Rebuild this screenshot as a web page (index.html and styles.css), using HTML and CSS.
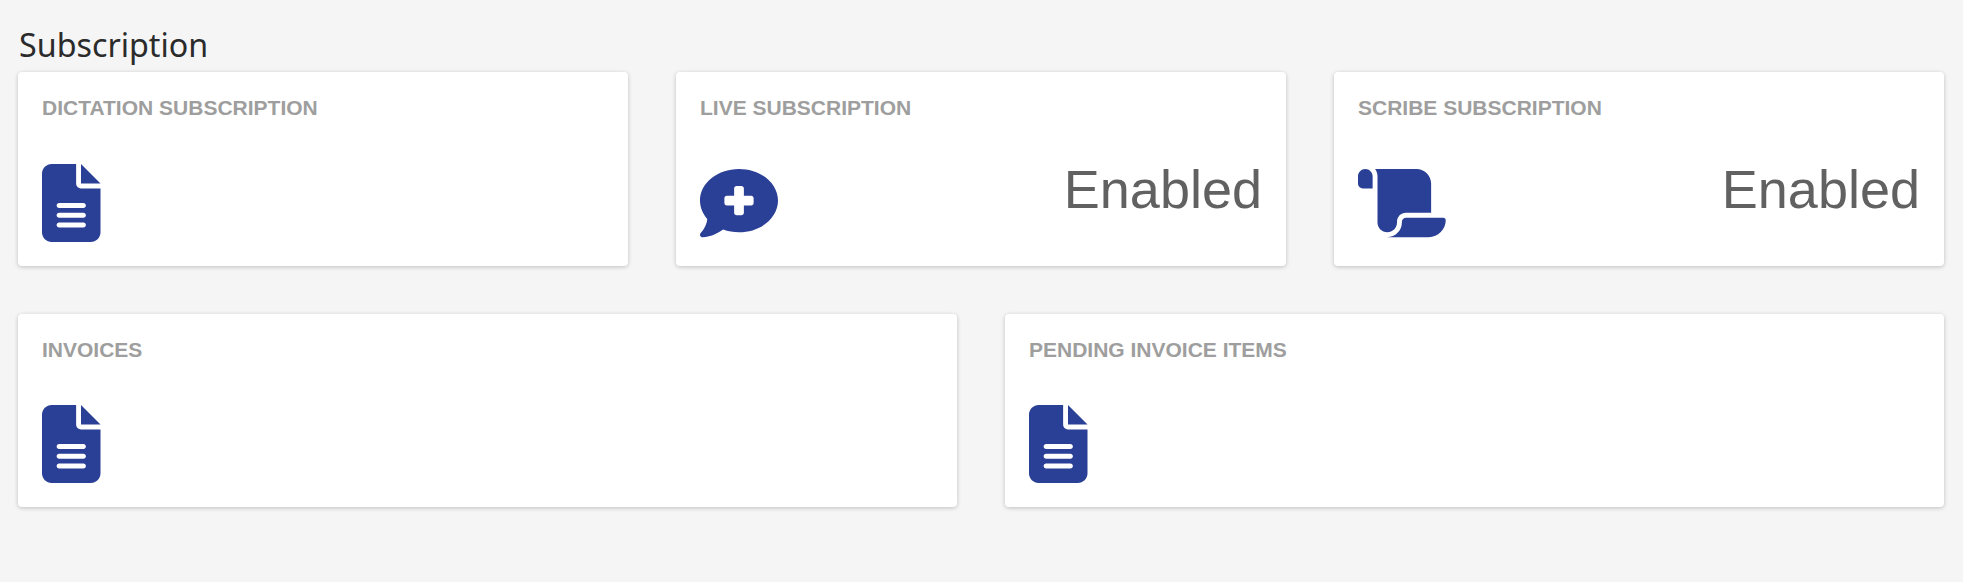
FILE: index.html
```html
<!DOCTYPE html>
<html lang="en">
<head>
<meta charset="utf-8">
<title>Subscription</title>
<link rel="stylesheet" href="styles.css">
</head>
<body>
<main class="page">
  <h1 class="title">Subscription</h1>
  <section class="row row-3">
    <article class="card">
      <h2 class="label">DICTATION SUBSCRIPTION</h2>
      <div class="content">
        <svg class="icon" viewBox="0 0 384 512"><path d="M64 0C28.7 0 0 28.7 0 64V448c0 35.3 28.7 64 64 64H320c35.3 0 64-28.7 64-64V160H256c-17.7 0-32-14.3-32-32V0H64zM256 0V128H384L256 0zM112 256H272c8.8 0 16 7.2 16 16s-7.2 16-16 16H112c-8.8 0-16-7.2-16-16s7.2-16 16-16zm0 64H272c8.8 0 16 7.2 16 16s-7.2 16-16 16H112c-8.8 0-16-7.2-16-16s7.2-16 16-16zm0 64H272c8.8 0 16 7.2 16 16s-7.2 16-16 16H112c-8.8 0-16-7.2-16-16s7.2-16 16-16z"/></svg>
      </div>
    </article>
    <article class="card">
      <h2 class="label">LIVE SUBSCRIPTION</h2>
      <div class="content">
        <svg class="icon" viewBox="0 0 512 512"><path d="M256 448c141.4 0 256-93.1 256-208S397.4 32 256 32S0 125.1 0 240c0 45.1 17.7 86.8 47.7 120.9c-1.9 24.5-11.4 46.3-21.4 62.9c-5.5 9.2-11.1 16.6-15.2 21.6c-2.1 2.5-3.7 4.4-4.9 5.7c-.6 .6-1 1.1-1.3 1.4l-.3 .3c-4.6 4.6-5.9 11.4-3.4 17.4c2.5 6 8.3 9.9 14.8 9.9c28.7 0 57.6-8.9 81.6-19.3c22.9-9.9 42.4-21.9 54.3-30.6c31.8 11.5 67 17.9 104.1 17.9zM224 160c0-8.8 7.2-16 16-16h32c8.8 0 16 7.2 16 16v48h48c8.8 0 16 7.2 16 16v32c0 8.8-7.2 16-16 16H288v48c0 8.8-7.2 16-16 16H240c-8.8 0-16-7.2-16-16V272H176c-8.8 0-16-7.2-16-16V224c0-8.8 7.2-16 16-16h48V160z"/></svg>
        <span class="value">Enabled</span>
      </div>
    </article>
    <article class="card">
      <h2 class="label">SCRIBE SUBSCRIPTION</h2>
      <div class="content">
        <svg class="icon" viewBox="0 0 576 512"><path d="M0 80v48c0 17.7 14.3 32 32 32H48 96V80c0-26.5-21.5-48-48-48S0 53.5 0 80zM112 32c10 13.4 16 30 16 48V384c0 35.3 28.7 64 64 64s64-28.7 64-64v-5.3c0-32.4 26.3-58.7 58.7-58.7H480V128c0-53-43-96-96-96H112zM464 480c61.9 0 112-50.1 112-112c0-8.8-7.2-16-16-16H314.7c-14.7 0-26.7 11.9-26.7 26.7V384c0 53-43 96-96 96H368h96z"/></svg>
        <span class="value">Enabled</span>
      </div>
    </article>
  </section>
  <section class="row row-2">
    <article class="card">
      <h2 class="label">INVOICES</h2>
      <div class="content">
        <svg class="icon" viewBox="0 0 384 512"><path d="M64 0C28.7 0 0 28.7 0 64V448c0 35.3 28.7 64 64 64H320c35.3 0 64-28.7 64-64V160H256c-17.7 0-32-14.3-32-32V0H64zM256 0V128H384L256 0zM112 256H272c8.8 0 16 7.2 16 16s-7.2 16-16 16H112c-8.8 0-16-7.2-16-16s7.2-16 16-16zm0 64H272c8.8 0 16 7.2 16 16s-7.2 16-16 16H112c-8.8 0-16-7.2-16-16s7.2-16 16-16zm0 64H272c8.8 0 16 7.2 16 16s-7.2 16-16 16H112c-8.8 0-16-7.2-16-16s7.2-16 16-16z"/></svg>
      </div>
    </article>
    <article class="card">
      <h2 class="label">PENDING INVOICE ITEMS</h2>
      <div class="content">
        <svg class="icon" viewBox="0 0 384 512"><path d="M64 0C28.7 0 0 28.7 0 64V448c0 35.3 28.7 64 64 64H320c35.3 0 64-28.7 64-64V160H256c-17.7 0-32-14.3-32-32V0H64zM256 0V128H384L256 0zM112 256H272c8.8 0 16 7.2 16 16s-7.2 16-16 16H112c-8.8 0-16-7.2-16-16s7.2-16 16-16zm0 64H272c8.8 0 16 7.2 16 16s-7.2 16-16 16H112c-8.8 0-16-7.2-16-16s7.2-16 16-16zm0 64H272c8.8 0 16 7.2 16 16s-7.2 16-16 16H112c-8.8 0-16-7.2-16-16s7.2-16 16-16z"/></svg>
      </div>
    </article>
  </section>
</main>
</body>
</html>
```
FILE: styles.css
```css
html, body {
  margin: 0;
  padding: 0;
  background: #f5f5f5;
}
.page {
  padding: 20px 19px 0 18px;
  display: flex;
  flex-direction: column;
}
.title {
  margin: 0;
  padding-left: 1px;
  font-family: "Noto Sans", sans-serif;
  font-weight: 400;
  font-size: 32.25px;
  line-height: 50px;
  height: 52px;
  color: #2b2b2b;
}
.row {
  display: grid;
  gap: 48px;
  margin-bottom: 48px;
}
.row-3 { grid-template-columns: repeat(3, 1fr); }
.row-2 { grid-template-columns: repeat(2, 1fr); }
.card {
  height: 193.5px;
  box-sizing: border-box;
  padding: 24px;
  background: #fff;
  border-radius: 4px;
  box-shadow: 0 1px 4px rgba(0, 0, 0, 0.22);
  display: flex;
  flex-direction: column;
  justify-content: space-between;
}
.label {
  margin: 0;
  font-family: "Liberation Sans", Arial, sans-serif;
  font-weight: 700;
  font-size: 21px;
  line-height: 24px;
  color: #9e9e9e;
}
.content {
  display: flex;
  justify-content: space-between;
  align-items: flex-start;
  height: 78px;
}
.icon {
  height: 78px;
  width: auto;
  fill: #2a3f96;
  display: block;
}
.value {
  font-family: "Liberation Sans", Arial, sans-serif;
  font-size: 54px;
  line-height: 50px;
  color: #616161;
}
```
